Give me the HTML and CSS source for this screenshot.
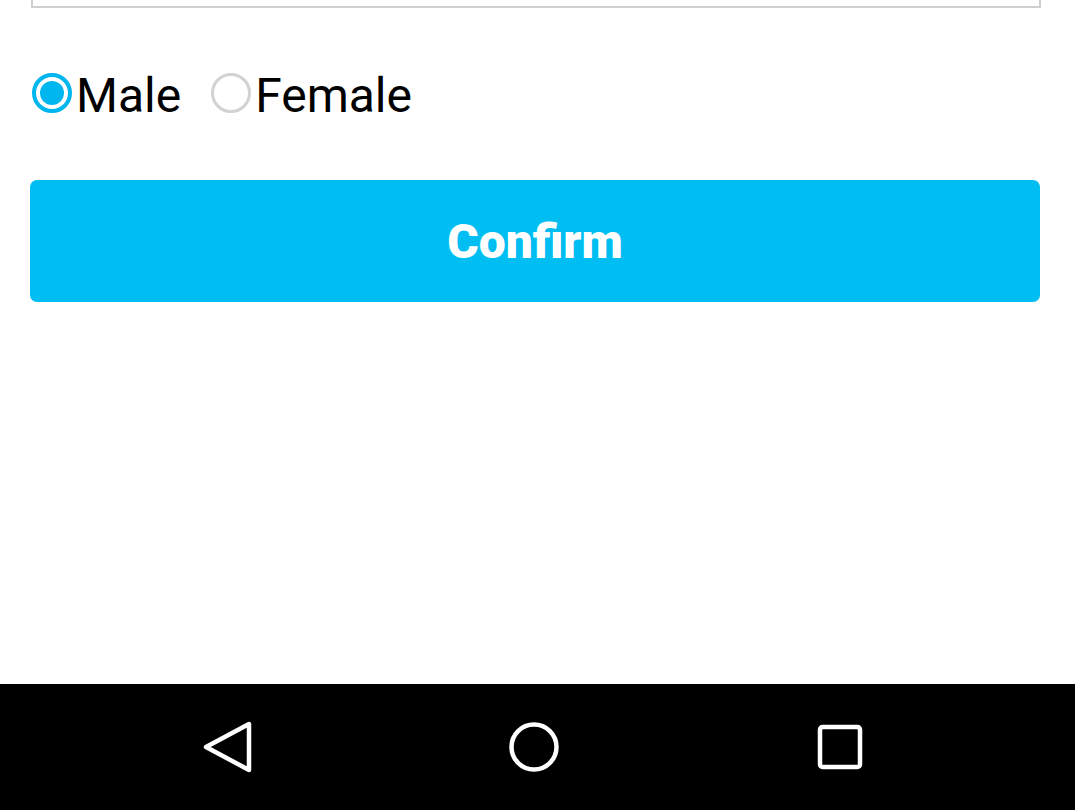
FILE: index.html
```html
<!DOCTYPE html>
<html>
<head>
<meta charset="utf-8">
<link rel="stylesheet" href="styles.css">
</head>
<body>
<div class="screen">
  <div class="content">
    <div class="field"></div>
    <div class="gender">
      <label class="option">
        <span class="radio checked"></span>
        <span class="label">Male</span>
      </label>
      <label class="option">
        <span class="radio"></span>
        <span class="label">Female</span>
      </label>
    </div>
    <button class="confirm">Confirm</button>
  </div>
  <nav class="navbar">
    <svg class="nav-icon" width="54" height="54" viewBox="0 0 54 54">
      <path d="M48 4 L48 50 L5 27 Z" fill="none" stroke="#fff" stroke-width="4.5" stroke-linejoin="round"/>
    </svg>
    <svg class="nav-icon" width="54" height="54" viewBox="0 0 54 54">
      <circle cx="27" cy="27" r="22.5" fill="none" stroke="#fff" stroke-width="4.5"/>
    </svg>
    <svg class="nav-icon" width="54" height="54" viewBox="0 0 54 54">
      <rect x="7" y="7" width="40" height="40" rx="2.5" fill="none" stroke="#fff" stroke-width="4.5"/>
    </svg>
  </nav>
</div>
</body>
</html>
```

FILE: styles.css
```css
* { box-sizing: border-box; }
html, body {
  margin: 0;
  padding: 0;
  background: #fff;
}
.screen {
  width: 1075px;
  height: 810px;
  display: flex;
  flex-direction: column;
  overflow: hidden;
}
.content {
  flex: 1;
  padding: 0 35px 0 30px;
}
.field {
  height: 80px;
  margin-top: -72px;
  margin-left: 1px;
  margin-right: -1px;
  border: 2px solid #cfcfcf;
  background: #fff;
}
.gender {
  display: flex;
  align-items: center;
  gap: 28px;
  margin-top: 65px;
  height: 40px;
}
.option {
  display: flex;
  align-items: center;
  gap: 4px;
}
.radio {
  width: 40px;
  height: 40px;
  border-radius: 50%;
  border: 3px solid #d2d2d2;
  display: flex;
  align-items: center;
  justify-content: center;
  margin-left: 2px;
}
.radio.checked {
  border: 4px solid #00b6ee;
}
.radio.checked::after {
  content: "";
  width: 24px;
  height: 24px;
  border-radius: 50%;
  background: #00b6ee;
}
.label {
  font-family: Roboto, "Noto Sans", sans-serif;
  font-size: 48px;
  line-height: 48px;
  color: #000;
  margin-top: 6px;
}
.confirm {
  display: block;
  width: 1010px;
  height: 122px;
  margin-top: 67px;
  border: none;
  border-radius: 7px;
  background: #00bdf2;
  color: #fff;
  font-family: Roboto, "Noto Sans", sans-serif;
  font-weight: 900;
  font-size: 48px;
  padding: 0;
}
.navbar {
  height: 126px;
  background: #000;
  display: flex;
  align-items: center;
  gap: 252px;
  padding: 0 0 0 201px;
}
.nav-icon {
  display: block;
}
```
